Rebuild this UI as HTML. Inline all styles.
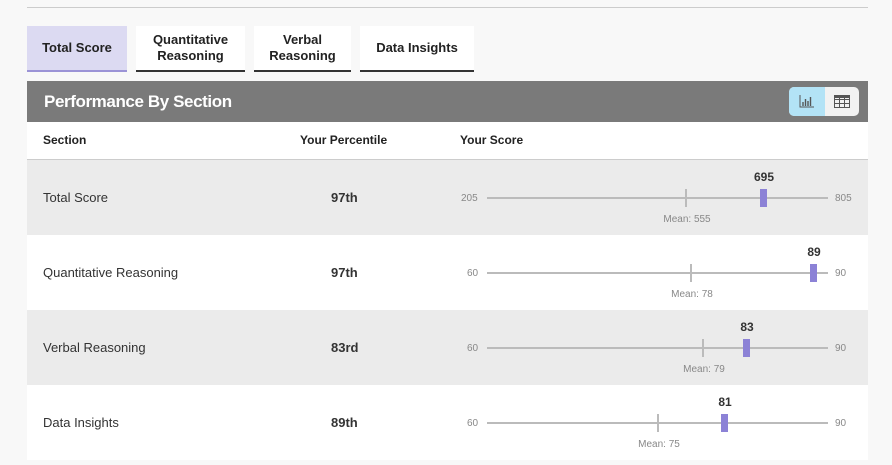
<!DOCTYPE html>
<html><head><style>
*{margin:0;padding:0;box-sizing:border-box}
body{width:892px;height:465px;background:#f8f8f8;font-family:"Liberation Sans",sans-serif;position:relative;overflow:hidden;color:#222}
.abs{position:absolute}
.tab{position:absolute;top:26px;height:46px;background:#fff;border-bottom:2px solid #333;font-weight:bold;font-size:13px;color:#222;display:flex;align-items:center;justify-content:center;text-align:center;line-height:16px}
.row{position:absolute;left:27px;width:841px;height:75px}
.row .name{position:absolute;left:16px;top:30px;font-size:13px;color:#333}
.row .pct{position:absolute;left:304px;top:30px;font-size:13px;font-weight:bold;color:#333}
.track{position:absolute;left:460px;top:37px;width:341px;height:2px;background:#bbb}
.lab{position:absolute;font-size:10px;color:#888;top:33px}
.mean{position:absolute;width:2px;height:18px;background:#bbb;top:29px}
.meanl{position:absolute;font-size:10px;color:#888;top:54px;transform:translateX(-50%)}
.mk{position:absolute;width:7px;height:18px;background:#8c82d6;top:29px}
.sc{position:absolute;font-size:12px;font-weight:bold;color:#333;top:10px;transform:translateX(-50%)}
</style></head><body>
<div class="abs" style="left:27px;top:7px;width:841px;height:1px;background:#ccc"></div>
<div class="tab" style="left:27px;width:100px;background:#dcdaf2;border-bottom-color:#9b93d6">Total Score</div>
<div class="tab" style="left:136px;width:109px">Quantitative<br>Reasoning</div>
<div class="tab" style="left:254px;width:97px">Verbal<br>Reasoning</div>
<div class="tab" style="left:360px;width:114px">Data Insights</div>
<div class="abs" style="left:27px;top:81px;width:841px;height:41px;background:#7a7a7a"></div>
<div class="abs" style="left:44px;top:92px;color:#fff;font-weight:bold;font-size:17px;letter-spacing:-0.4px">Performance By Section</div>
<div class="abs" style="left:789px;top:87px;width:70px;height:29px;background:#f2f2f2;border-radius:5px;overflow:hidden">
<div style="position:absolute;left:0;top:0;width:36px;height:29px;background:#b3e3f6"></div>
<svg style="position:absolute;left:10px;top:7px" width="16" height="14" viewBox="0 0 16 14"><path d="M1 1V13H15" stroke="#555" fill="none" stroke-width="1"/><path d="M4 8v4M6.5 5v7M9 7v5M11.5 3v9" stroke="#555" stroke-width="1.4"/></svg>
<svg style="position:absolute;left:45px;top:8px" width="16" height="13" viewBox="0 0 16 13"><rect x="0.5" y="0.5" width="15" height="12" fill="none" stroke="#555"/><path d="M0 4.5H16M0 8.5H16M5.5 0V13M10.5 0V13" stroke="#555"/><rect x="0" y="0" width="16" height="3" fill="#555"/></svg>
</div>
<div class="abs" style="left:27px;top:122px;width:841px;height:38px;background:#fff;border-bottom:1px solid #ccc"></div>
<div class="abs" style="left:43px;top:133px;font-size:12px;font-weight:bold">Section</div>
<div class="abs" style="left:300px;top:133px;font-size:12px;font-weight:bold">Your Percentile</div>
<div class="abs" style="left:460px;top:133px;font-size:12px;font-weight:bold">Your Score</div>

<div class="row" style="top:160px;background:#ebebeb"><div class="name">Total Score</div><div class="pct">97th</div>
<div class="lab" style="left:434px">205</div><div class="track"></div><div class="lab" style="left:808px">805</div>
<div class="mean" style="left:658px"></div><div class="meanl" style="left:660px">Mean: 555</div>
<div class="mk" style="left:733px"></div><div class="sc" style="left:737px">695</div></div>

<div class="row" style="top:235px;background:#fff"><div class="name">Quantitative Reasoning</div><div class="pct">97th</div>
<div class="lab" style="left:440px">60</div><div class="track"></div><div class="lab" style="left:808px">90</div>
<div class="mean" style="left:663px"></div><div class="meanl" style="left:665px">Mean: 78</div>
<div class="mk" style="left:783px"></div><div class="sc" style="left:787px">89</div></div>

<div class="row" style="top:310px;background:#ebebeb"><div class="name">Verbal Reasoning</div><div class="pct">83rd</div>
<div class="lab" style="left:440px">60</div><div class="track"></div><div class="lab" style="left:808px">90</div>
<div class="mean" style="left:675px"></div><div class="meanl" style="left:677px">Mean: 79</div>
<div class="mk" style="left:716px"></div><div class="sc" style="left:720px">83</div></div>

<div class="row" style="top:385px;background:#fff"><div class="name">Data Insights</div><div class="pct">89th</div>
<div class="lab" style="left:440px">60</div><div class="track"></div><div class="lab" style="left:808px">90</div>
<div class="mean" style="left:630px"></div><div class="meanl" style="left:632px">Mean: 75</div>
<div class="mk" style="left:694px"></div><div class="sc" style="left:698px">81</div></div>
</body></html>
